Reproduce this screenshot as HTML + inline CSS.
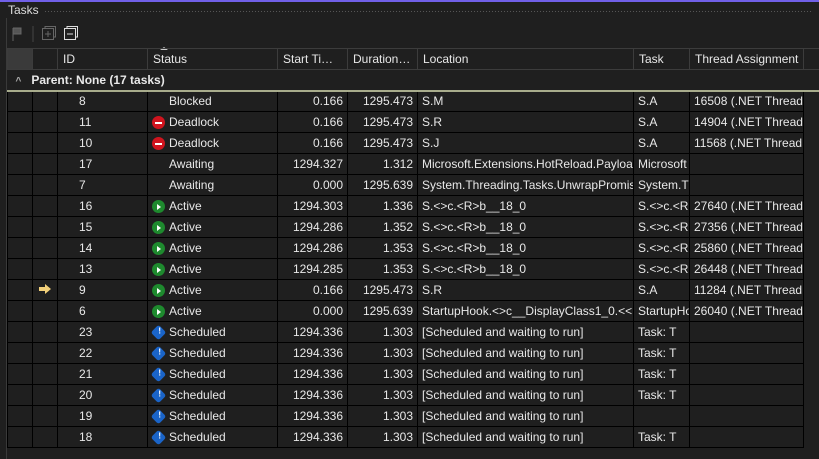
<!DOCTYPE html><html><head><style>
body{margin:0;width:819px;height:459px;background:#1f1f1f;font-family:"Liberation Sans",sans-serif;font-size:12px;color:#e8e8e8;position:relative;overflow:hidden}
.top{position:absolute;left:0;top:0;width:819px;height:2px;background:#7160e8}
.title{position:absolute;left:8px;top:3px;font-size:12px;color:#dcdcdc}
.dots{position:absolute;left:44px;top:10px;right:6px;height:3px;background-image:radial-gradient(#555 0.6px,transparent 0.8px);background-size:3px 3px}
.lb{position:absolute;left:6px;top:18px;width:1px;height:441px;background:#3a3a3a}
table{position:absolute;left:7px;top:48px;border-collapse:collapse;table-layout:fixed;width:812px}
td{height:21px;border:1px solid #000;padding:0 4px;white-space:nowrap;overflow:hidden;box-sizing:border-box}
tr.h td{border-color:#3c3c3c;height:21px;padding-left:5px;text-overflow:ellipsis}
td.r{text-align:right}
td.e{border:none}
.ic{display:inline-block;width:13px;height:13px;border-radius:50%;vertical-align:-3px;margin-right:4px;position:relative}
.dl{background:#d0141e}.dl:after{content:"";position:absolute;left:3px;top:5.5px;width:7px;height:2px;background:#fff}
.ac{background:#1e8a2e}.ac:after{content:"";position:absolute;left:5px;top:3.5px;border-left:4px solid #fff;border-top:3px solid transparent;border-bottom:3px solid transparent}
.sc{background:#1a64c8;border-radius:3px;transform:rotate(45deg) scale(.85)}.sc:after{content:"!";position:absolute;left:0;top:-1px;width:13px;text-align:center;color:#fff;font-weight:bold;font-size:10px;transform:rotate(-45deg)}
.no{display:inline-block;width:17px}
</style></head><body>
<div class="top"></div><div class="title">Tasks</div><div class="dots"></div><div class="lb"></div>
<svg style="position:absolute;left:10px;top:25px" width="75" height="18">
<path d="M3 3v13M3 3h8v6H3" stroke="#666" fill="#555"/>
<line x1="23" y1="1" x2="23" y2="17" stroke="#444"/>
<rect x="32.5" y="3.5" width="11" height="11" fill="none" stroke="#666"/><path d="M38 6v6M35 9h6" stroke="#666"/><path d="M35 3V1.5h10.5V12H44" fill="none" stroke="#666"/>
<rect x="54.5" y="3.5" width="11" height="11" fill="none" stroke="#ddd"/><path d="M57 9h6" stroke="#ddd"/><path d="M57 3V1.5h10.5V12H66" fill="none" stroke="#ddd"/>
</svg>
<div style="position:absolute;left:160px;top:47px;width:0;height:0;border-left:4px solid transparent;border-right:4px solid transparent;border-bottom:3px solid #ccc"></div>
<table>
<colgroup><col style="width:25px"><col style="width:25px"><col style="width:90px"><col style="width:130px"><col style="width:70px"><col style="width:70px"><col style="width:216px"><col style="width:56px"><col style="width:114px"><col style="width:16px"></colgroup>
<tr class="h"><td style="background:#3a3a3a"></td><td></td><td>ID</td><td>Status</td><td>Start Time (sec)</td><td>Duration (sec)</td><td>Location</td><td>Task</td><td>Thread Assignment</td><td style="border-right:none"></td></tr>
<tr><td colspan="10" style="border:none;border-bottom:2px solid #a8ac8c;height:21px;padding-left:8px;font-weight:bold"><span style="color:#aaa;font-size:10px;margin-right:10px">^</span>Parent: None (17 tasks)</td></tr>
<tr><td></td><td></td><td><span class="no"></span>8</td><td><span class="ic"></span>Blocked</td><td class="r">0.166</td><td class="r">1295.473</td><td>S.M</td><td>S.A</td><td>16508 (.NET ThreadPool Worker)</td><td class="e"></td></tr>
<tr><td></td><td></td><td><span class="no"></span>11</td><td><span class="ic dl"></span>Deadlock</td><td class="r">0.166</td><td class="r">1295.473</td><td>S.R</td><td>S.A</td><td>14904 (.NET ThreadPool Worker)</td><td class="e"></td></tr>
<tr><td></td><td></td><td><span class="no"></span>10</td><td><span class="ic dl"></span>Deadlock</td><td class="r">0.166</td><td class="r">1295.473</td><td>S.J</td><td>S.A</td><td>11568 (.NET ThreadPool Worker)</td><td class="e"></td></tr>
<tr><td></td><td></td><td><span class="no"></span>17</td><td><span class="ic"></span>Awaiting</td><td class="r">1294.327</td><td class="r">1.312</td><td>Microsoft.Extensions.HotReload.PayloadType</td><td>Microsoft</td><td></td><td class="e"></td></tr>
<tr><td></td><td></td><td><span class="no"></span>7</td><td><span class="ic"></span>Awaiting</td><td class="r">0.000</td><td class="r">1295.639</td><td>System.Threading.Tasks.UnwrapPromise</td><td>System.T</td><td></td><td class="e"></td></tr>
<tr><td></td><td></td><td><span class="no"></span>16</td><td><span class="ic ac"></span>Active</td><td class="r">1294.303</td><td class="r">1.336</td><td>S.&lt;&gt;c.&lt;R&gt;b__18_0</td><td>S.&lt;&gt;c.&lt;R</td><td>27640 (.NET ThreadPool Worker)</td><td class="e"></td></tr>
<tr><td></td><td></td><td><span class="no"></span>15</td><td><span class="ic ac"></span>Active</td><td class="r">1294.286</td><td class="r">1.352</td><td>S.&lt;&gt;c.&lt;R&gt;b__18_0</td><td>S.&lt;&gt;c.&lt;R</td><td>27356 (.NET ThreadPool Worker)</td><td class="e"></td></tr>
<tr><td></td><td></td><td><span class="no"></span>14</td><td><span class="ic ac"></span>Active</td><td class="r">1294.286</td><td class="r">1.353</td><td>S.&lt;&gt;c.&lt;R&gt;b__18_0</td><td>S.&lt;&gt;c.&lt;R</td><td>25860 (.NET ThreadPool Worker)</td><td class="e"></td></tr>
<tr><td></td><td></td><td><span class="no"></span>13</td><td><span class="ic ac"></span>Active</td><td class="r">1294.285</td><td class="r">1.353</td><td>S.&lt;&gt;c.&lt;R&gt;b__18_0</td><td>S.&lt;&gt;c.&lt;R</td><td>26448 (.NET ThreadPool Worker)</td><td class="e"></td></tr>
<tr><td></td><td style="text-align:center;padding:0"><svg width="12" height="10"><path d="M0 3h6V0l6 5-6 5V7H0z" fill="#f2d07a"/></svg></td><td><span class="no"></span>9</td><td><span class="ic ac"></span>Active</td><td class="r">0.166</td><td class="r">1295.473</td><td>S.R</td><td>S.A</td><td>11284 (.NET ThreadPool Worker)</td><td class="e"></td></tr>
<tr><td></td><td></td><td><span class="no"></span>6</td><td><span class="ic ac"></span>Active</td><td class="r">0.000</td><td class="r">1295.639</td><td>StartupHook.&lt;&gt;c__DisplayClass1_0.&lt;&lt;Initialize</td><td>StartupHook</td><td>26040 (.NET ThreadPool Worker)</td><td class="e"></td></tr>
<tr><td></td><td></td><td><span class="no"></span>23</td><td><span class="ic sc"></span>Scheduled</td><td class="r">1294.336</td><td class="r">1.303</td><td>[Scheduled and waiting to run]</td><td>Task: T</td><td></td><td class="e"></td></tr>
<tr><td></td><td></td><td><span class="no"></span>22</td><td><span class="ic sc"></span>Scheduled</td><td class="r">1294.336</td><td class="r">1.303</td><td>[Scheduled and waiting to run]</td><td>Task: T</td><td></td><td class="e"></td></tr>
<tr><td></td><td></td><td><span class="no"></span>21</td><td><span class="ic sc"></span>Scheduled</td><td class="r">1294.336</td><td class="r">1.303</td><td>[Scheduled and waiting to run]</td><td>Task: T</td><td></td><td class="e"></td></tr>
<tr><td></td><td></td><td><span class="no"></span>20</td><td><span class="ic sc"></span>Scheduled</td><td class="r">1294.336</td><td class="r">1.303</td><td>[Scheduled and waiting to run]</td><td>Task: T</td><td></td><td class="e"></td></tr>
<tr><td></td><td></td><td><span class="no"></span>19</td><td><span class="ic sc"></span>Scheduled</td><td class="r">1294.336</td><td class="r">1.303</td><td>[Scheduled and waiting to run]</td><td></td><td></td><td class="e"></td></tr>
<tr><td></td><td></td><td><span class="no"></span>18</td><td><span class="ic sc"></span>Scheduled</td><td class="r">1294.336</td><td class="r">1.303</td><td>[Scheduled and waiting to run]</td><td>Task: T</td><td></td><td class="e"></td></tr>
</table>
</body></html>
